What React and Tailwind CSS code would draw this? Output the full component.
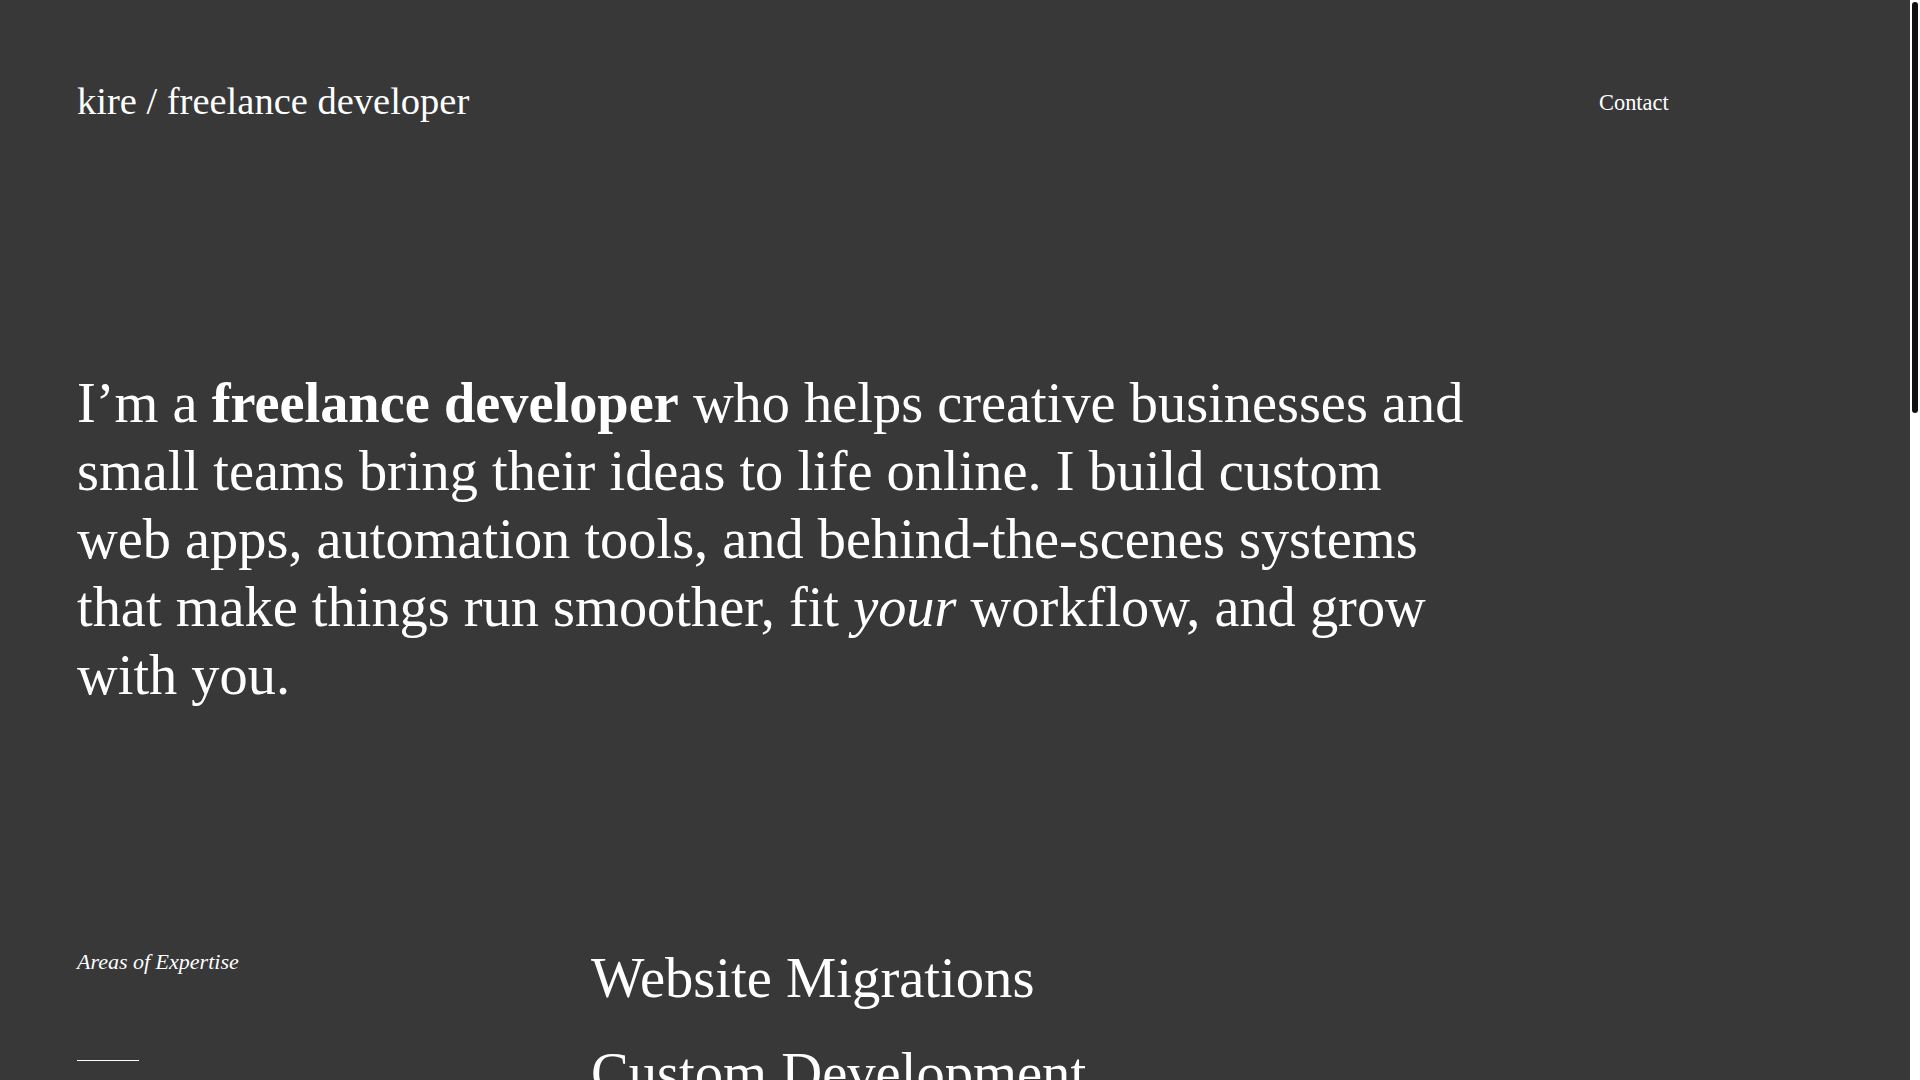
import React from 'react';

const areas = [
  'Website Migrations',
  'Custom Development',
  'Automation Tools',
  'Web Applications',
  'API Integrations',
  'Maintenance & Support'
];

export default function App() {
  return (
    <div className="flex h-screen bg-[#383838] text-white font-['Liberation_Serif',serif]">
      <div className="flex-1 overflow-y-auto [scrollbar-width:none]">
        <div className="px-[77px]">
          {/* Header */}
          <header className="flex items-center pt-[82px]">
            <a href="#" className="flex-1 text-[38.5px] leading-none">
              kire / freelance developer
            </a>
            <nav className="w-[234px] pt-[3px] text-[22.4px] leading-none">
              <a href="#">Contact</a>
            </nav>
          </header>

          {/* Intro */}
          <section className="pt-[248px]">
            <p className="w-[1400px] text-[56.4px] leading-[68px]">
              I’m a <strong className="font-bold">freelance developer</strong> who helps creative businesses and
              small teams bring their ideas to life online. I build custom web apps, automation tools, and
              behind-the-scenes systems that make things run smoother, fit <em className="italic">your</em> workflow,
              and grow with you.
            </p>
          </section>

          {/* Expertise */}
          <section className="grid grid-cols-[514px_1fr] pt-[239px]">
            <div className="flex flex-col">
              <h2 className="text-[22px] leading-[28px] italic">Areas of Expertise</h2>
              <div className="mt-[84px] h-px w-[62px] bg-white" />
            </div>
            <ul className="flex flex-col gap-[34px]">
              {areas.map((a) => (
                <li key={a} className="text-[56.6px] leading-[61px]">{a}</li>
              ))}
            </ul>
          </section>

          {/* Approach */}
          <section className="grid grid-cols-[514px_1fr] pt-[240px]">
            <div className="flex flex-col">
              <h2 className="text-[22px] leading-[28px] italic">How I Work</h2>
              <div className="mt-[84px] h-px w-[62px] bg-white" />
            </div>
            <p className="w-[1000px] text-[32px] leading-[44px]">
              Every project starts with a conversation. I take the time to understand how your business runs, then
              build tools that fit the way you already work — simple to use, easy to maintain, and ready to grow.
            </p>
          </section>

          {/* Footer */}
          <footer className="flex items-end justify-between pt-[240px] pb-[77px]">
            <div className="flex flex-col gap-4">
              <span className="text-[22px] italic">Let’s work together</span>
              <a href="#" className="text-[56px] leading-[68px]">hello@kire.dev</a>
            </div>
            <span className="w-[234px] text-[22px]">© 2025 kire</span>
          </footer>
        </div>
      </div>

      {/* Scroll track */}
      <aside className="w-[10px] shrink-0 bg-white px-[2px] pt-[2px]">
        <div className="h-[411px] rounded-[3px] bg-[#111111]" />
      </aside>
    </div>
  );
}
